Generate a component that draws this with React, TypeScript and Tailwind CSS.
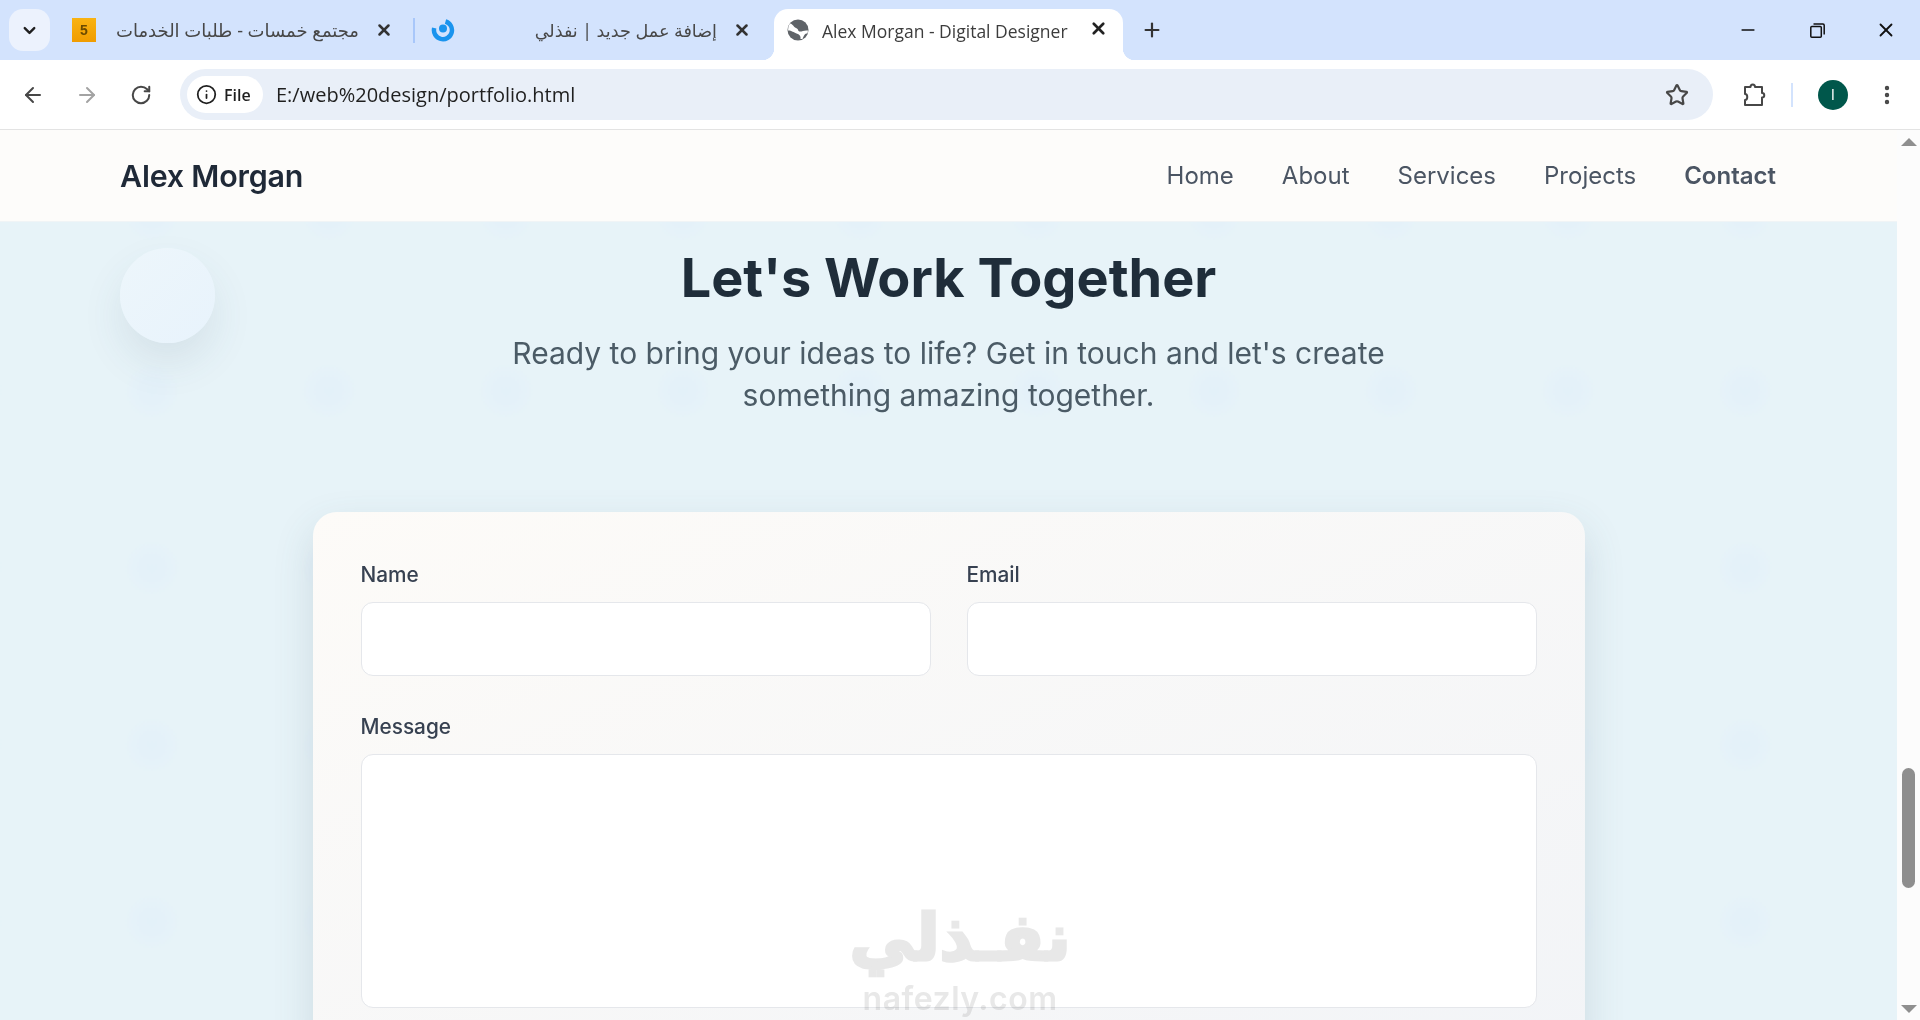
import { ArrowLeft, ArrowRight, ChevronDown, EllipsisVertical, Info, Minus, Plus, RotateCw, Star, X } from 'lucide-react';

function Globe() {
  return (
    <svg width="22" height="22" viewBox="0 0 22 22" className="shrink-0">
      <circle cx="11" cy="11" r="10.500" fill="#5f6368" />
      <path d="M3 4.500C6 5 6.500 8 9 9c3 1 1.500 3.500 4 3.500 2.500 0 4-1.500 8-1l-.5 3c-3 0-3.500 2-5 5.500h-2c.5-3-1-4.500-4-5.500C6.500 13.500 5 11.500 1 11.500L1.500 7z" fill="#fff" />
    </svg>
  );
}

function RestoreIcon() {
  return (
    <svg width="15" height="15" viewBox="0 0 15 15" fill="none" stroke="#111" strokeWidth="1.500">
      <rect x="0.800" y="3.500" width="10.500" height="10.700" rx="1" />
      <path d="M3.500 1h9.500a1.200 1.200 0 0 1 1.200 1.200v9.300" />
    </svg>
  );
}

function PuzzleIcon() {
  return (
    <svg width="26" height="26" viewBox="0 0 26 26" fill="none" stroke="#474747" strokeWidth="2" strokeLinejoin="round">
      <path d="M4 5h5.500c0-3.500 4.500-3.500 4.500 0H21v6c3 0 3 4.500 0 4.500V23H4v-5c3 0 3-6 0-6z" />
    </svg>
  );
}

function NafezlyIcon() {
  return (
    <svg width="24" height="24" viewBox="0 0 24 24" fill="none" className="shrink-0">
      <path d="M14.500 3.500A9 9 0 1 1 3.200 10" stroke="#1a94ee" strokeWidth="4.500" />
      <circle cx="12" cy="10.500" r="4" fill="#1a94ee" />
    </svg>
  );
}

export default function App() {
  return (
    <div className="relative flex h-screen w-full flex-col overflow-hidden bg-white font-['Inter',sans-serif]">
      {/* tab strip */}
      <div className="flex h-[60px] shrink-0 items-start bg-[#d3e3fd] text-[#474747]">
        <div className="ml-[9px] mt-[9px] flex h-[42px] w-[41px] items-center justify-center rounded-[14px] bg-[#ecf2fd]">
          <ChevronDown size={19} strokeWidth={3} color="#1f1f1f" />
        </div>
        <div className="ml-[22px] mt-[18px] flex h-6 w-[341px] items-center">
          <div className="flex h-6 w-6 items-center justify-center bg-gradient-to-b from-[#f9b312] to-[#f09c00] font-['Liberation_Sans',sans-serif] text-[14px] font-bold text-[#6b4a00]">5</div>
          <div dir="rtl" className="ml-[22px] w-[241px] font-['Noto_Sans','DejaVu_Sans',sans-serif] text-[18px] leading-6 whitespace-nowrap">مجتمع خمسات - طلبات الخدمات</div>
          <X size={18} strokeWidth={3.400} color="#333" className="ml-[16px]" />
        </div>
        <div className="mt-[18px] h-[25px] w-[2px] bg-[#a8c7fa]" />
        <div className="ml-[16px] mt-[18px] flex h-6 w-[330px] items-center">
          <NafezlyIcon />
          <div dir="rtl" className="ml-[80px] w-[182px] font-['Noto_Sans','DejaVu_Sans',sans-serif] text-[17.600px] leading-6 whitespace-nowrap">إضافة عمل جديد | نفذلي</div>
          <X size={18} strokeWidth={3.400} color="#333" className="ml-[16px]" />
        </div>
        <div className="relative ml-[13px] mt-[9px] flex h-[51px] w-[349px] items-start rounded-t-[14px] bg-white pl-[13px] pt-[10px]">
          <div className="absolute -left-3 bottom-0 h-3 w-3 bg-[radial-gradient(circle_at_0_0,#d3e3fd_12px,#ffffff_12.500px)]" />
          <div className="absolute -right-3 bottom-0 h-3 w-3 bg-[radial-gradient(circle_at_100%_0,#d3e3fd_12px,#ffffff_12.500px)]" />
          <Globe />
          <span className="ml-[13px] w-[246px] font-['Open_Sans',sans-serif] text-[17.500px] leading-[24px] text-[#3c3c3c] whitespace-nowrap">Alex Morgan - Digital Designer</span>
          <X size={19} strokeWidth={3.400} color="#222" className="ml-[21px]" />
        </div>
        <Plus size={22} strokeWidth={2.400} color="#333" className="ml-[18px] mt-[19px]" />
        <div className="flex-1" />
        <div className="mt-[19px] flex items-center">
          <Minus size={20} strokeWidth={2} color="#111" />
          <div className="ml-[52px]"><RestoreIcon /></div>
          <X size={22} strokeWidth={2} color="#111" className="ml-[50px] mr-[23px]" />
        </div>
      </div>

      {/* toolbar */}
      <div className="flex h-[70px] shrink-0 items-center border-b border-[#e3e3e3] bg-white pl-[6px]">
        <div className="flex h-[54px] w-[54px] items-center justify-center"><ArrowLeft size={24} strokeWidth={2} color="#474747" /></div>
        <div className="flex h-[54px] w-[54px] items-center justify-center"><ArrowRight size={24} strokeWidth={2} color="#a3a3a3" /></div>
        <div className="flex h-[54px] w-[54px] items-center justify-center"><RotateCw size={22} strokeWidth={2.200} color="#474747" /></div>
        <div className="ml-[12px] flex h-[51px] w-[1533px] items-center rounded-full bg-[#e9eff8] pl-[7px] pr-[24px]">
          <div className="flex h-[37px] w-[76px] items-center rounded-full bg-white pl-[9px]">
            <Info size={21} strokeWidth={2} color="#1f1f1f" />
            <span className="ml-[7px] font-['Open_Sans',sans-serif] text-[16px] font-semibold text-[#1f1f1f]">File</span>
          </div>
          <span className="ml-[13px] font-['Open_Sans',sans-serif] text-[20px] text-[#1f1f1f]">E:/web%20design/portfolio.html</span>
          <Star size={24} strokeWidth={2.200} color="#474747" className="ml-auto" />
        </div>
        <div className="ml-[28px]"><PuzzleIcon /></div>
        <div className="ml-[24px] h-[24px] w-[2px] bg-[#d3e3fd]" />
        <div className="ml-[25px] flex h-[30px] w-[30px] items-center justify-center rounded-full bg-[#00574b] text-[14px] text-white">I</div>
        <EllipsisVertical size={24} strokeWidth={2.400} color="#474747" className="ml-[27px]" />
      </div>

      {/* page */}
      <div className="flex min-h-0 flex-1">
        <div className="flex min-w-0 flex-1 flex-col overflow-hidden">
          <div className="flex h-[92px] shrink-0 items-center justify-between border-b border-[#f0f4f6] bg-[#fdfcfa] pl-[120px] pr-[121px]">
            <span className="pt-[2px] text-[30.400px] font-semibold tracking-[-0.2px] text-[#1f2937]">Alex Morgan</span>
            <nav className="flex items-center gap-[48px] text-[24px] text-[#4b5563]">
              <span>Home</span>
              <span>About</span>
              <span>Services</span>
              <span>Projects</span>
              <span className="font-semibold">Contact</span>
            </nav>
          </div>

          <main className="relative flex min-h-0 flex-1 flex-col items-center bg-[#e7f3f8] bg-[radial-gradient(circle_at_center,#e3f1f9_0,#e4f1f9_12px,#e7f3f8_30px)] bg-[length:177px_177px] bg-[position:63.500px_80.500px] pt-[22px]">
            <div className="absolute left-[120px] top-[26px] h-[95px] w-[95px] rounded-full bg-gradient-to-br from-[#edf6fb] to-[#e8f3fc] shadow-[0_20px_40px_rgba(60,90,110,0.1)]" />
            <h1 className="text-[54px] font-bold leading-[68px] text-[#1f2d3a]">Let's Work Together</h1>
            <p className="mt-[20px] w-[900px] text-center text-[30px] leading-[42px] text-[#4b5b66]">
              Ready to bring your ideas to life? Get in touch and let's create something amazing together.
            </p>
            <form className="mt-[96px] w-[1272px] shrink-0 rounded-[24px] bg-gradient-to-br from-[#fdfbf8] to-[#f2f4f7] px-[48px] pb-[48px] pt-[49px] shadow-[0_16px_40px_rgba(70,100,115,0.16)]">
              <div className="grid grid-cols-2 gap-[36px]">
                <div>
                  <label className="block text-[20.800px] font-medium leading-[28px] text-[#374151]">Name</label>
                  <div className="mt-[13px] h-[74px] rounded-[12px] border border-[#e5e7eb] bg-white" />
                </div>
                <div>
                  <label className="block text-[20.800px] font-medium leading-[28px] text-[#374151]">Email</label>
                  <div className="mt-[13px] h-[74px] rounded-[12px] border border-[#e5e7eb] bg-white" />
                </div>
              </div>
              <label className="mt-[37px] block text-[20.800px] font-medium leading-[28px] text-[#374151]">Message</label>
              <div className="mt-[13px] h-[254px] rounded-[12px] border border-[#e5e7eb] bg-white" />
            </form>
          </main>
        </div>

        {/* scrollbar */}
        <div className="flex w-[23px] shrink-0 flex-col items-center bg-[#fcfcfc] pt-[8px] pb-[7px]">
          <div className="h-0 w-0 border-x-[8px] border-b-[8px] border-x-transparent border-b-[#8f8f8f]" />
          <div className="mt-[622px] h-[120px] w-[13px] rounded-full bg-[#8e8e8e]" />
          <div className="mt-auto h-0 w-0 border-x-[8px] border-t-[8px] border-x-transparent border-t-[#8f8f8f]" />
        </div>
      </div>

      {/* watermark */}
      <div className="pointer-events-none absolute left-[853px] top-[896px] flex w-[214px] flex-col items-center text-[#e8e8e8] mix-blend-multiply">
        <span dir="rtl" className="font-['DejaVu_Sans',sans-serif] text-[65px] font-bold leading-[84px] whitespace-nowrap [-webkit-text-stroke:3px_#e8e8e8]">نفـذلي</span>
        <span className="font-['Inter',sans-serif] text-[32px] font-semibold leading-[38px] tracking-[0.5px] whitespace-nowrap">nafezly.com</span>
      </div>
    </div>
  );
}
